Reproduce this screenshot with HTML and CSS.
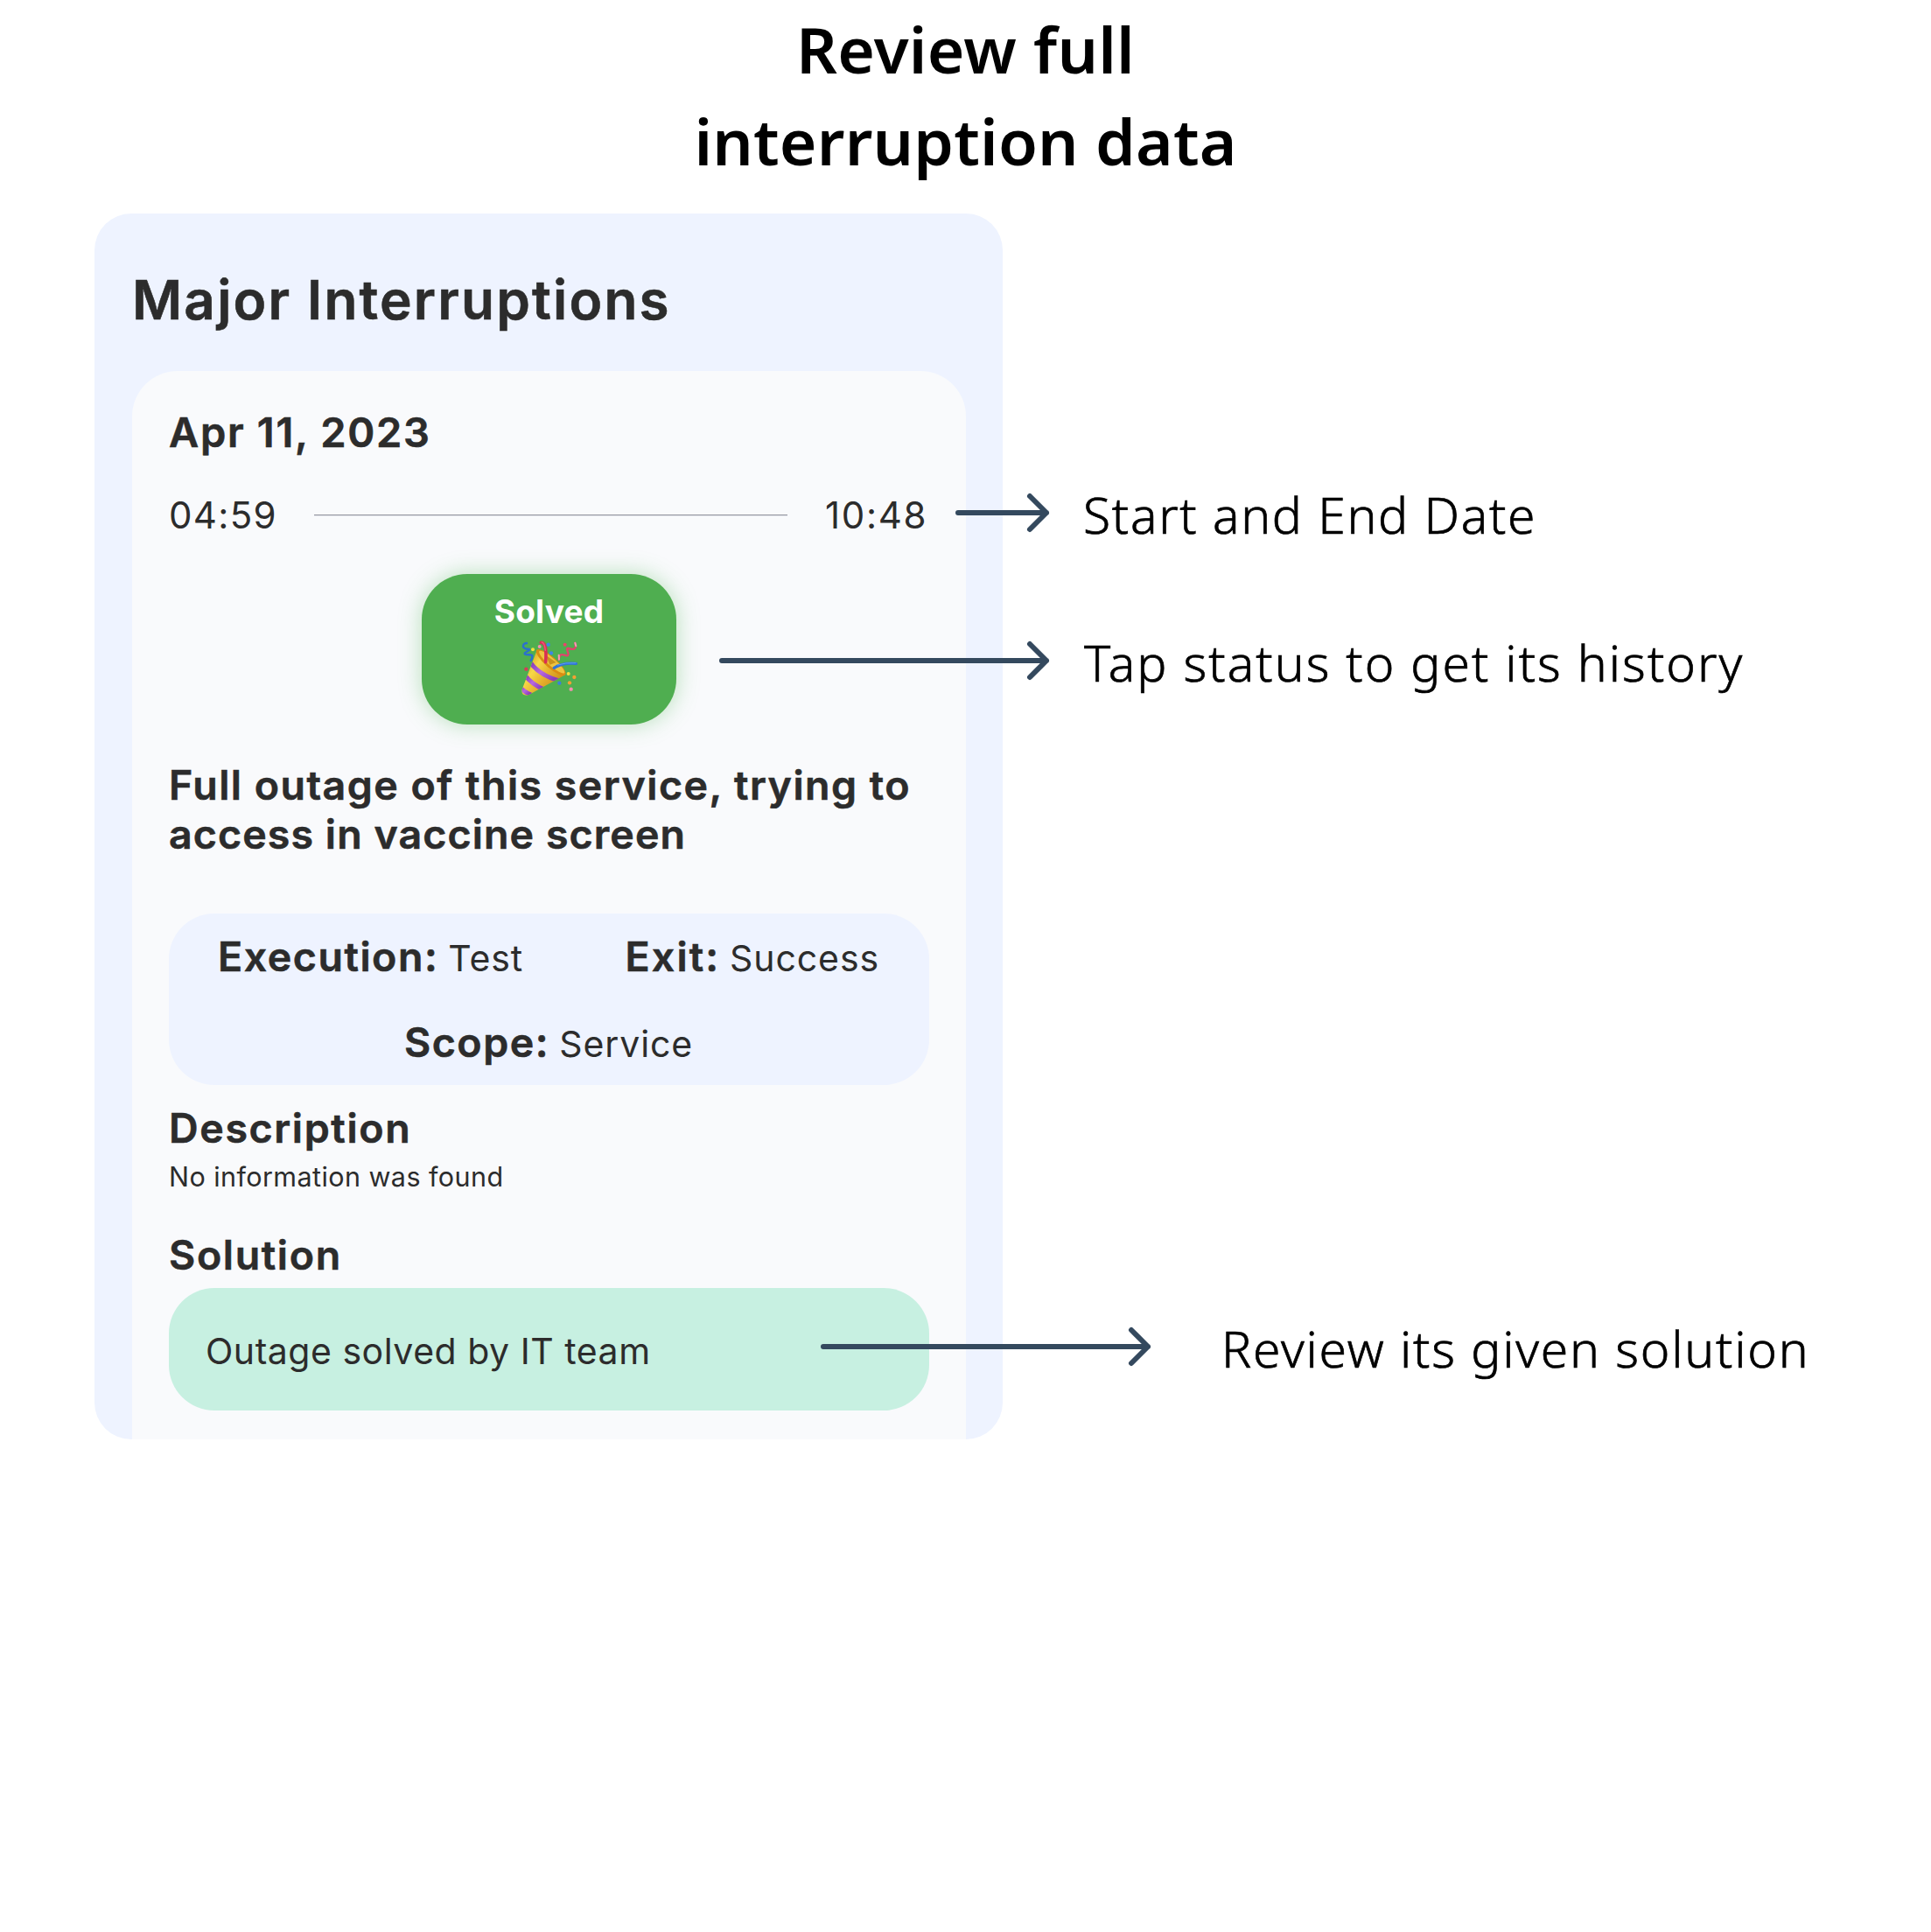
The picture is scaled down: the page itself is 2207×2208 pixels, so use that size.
FILE: index.html
```html
<!DOCTYPE html>
<html lang="en">
<head>
<meta charset="utf-8">
<title>Review full interruption data</title>
<link rel="stylesheet" href="styles.css">
</head>
<body>
<main class="page">
  <h1 class="headline">Review full<br>interruption data</h1>

  <section class="panel">
    <h2 class="panel-title">Major Interruptions</h2>
    <article class="card">
      <h3 class="date">Apr 11, 2023</h3>
      <div class="times">
        <span class="time time-start">04:59</span>
        <span class="rule"></span>
        <span class="time time-end">10:48</span>
      </div>
      <div class="status">
        <span class="status-label">Solved</span>
        <svg class="popper" viewBox="0 0 228 228" role="img" aria-label="Party popper">
          <defs>
            <linearGradient id="cone" x1="0" y1="0.3" x2="0.8" y2="0.9">
              <stop offset="0" stop-color="#d39a1c"/>
              <stop offset="0.3" stop-color="#f7d848"/>
              <stop offset="0.6" stop-color="#e5b02d"/>
              <stop offset="1" stop-color="#c98a17"/>
            </linearGradient>
            <linearGradient id="ribbon" x1="0" y1="0" x2="1" y2="0.6">
              <stop offset="0" stop-color="#8038b5"/>
              <stop offset="0.5" stop-color="#b768e0"/>
              <stop offset="1" stop-color="#8a3dbb"/>
            </linearGradient>
            <clipPath id="coneClip"><path d="M71 54 L20 189 Q16 208 36 209 L45 206 L168 139 Q150 124 118 98 Z"/></clipPath>
          </defs>
          <path d="M71 54 L20 189 Q16 208 36 209 L45 206 L168 139 Q150 124 118 98 Z" fill="url(#cone)"/>
          <g clip-path="url(#coneClip)" fill="none" stroke="url(#ribbon)" stroke-width="15">
            <path d="M48 96 Q78 139 146 159"/>
            <path d="M30 140 Q53 171 98 190"/>
            <path d="M12 180 Q27 197 52 208"/>
          </g>
          <ellipse cx="119" cy="96" rx="65" ry="19" transform="rotate(41 119 96)" fill="#d98c12"/>
          <ellipse cx="122" cy="95" rx="57" ry="13" transform="rotate(41 122 95)" fill="#edc440"/>
          <path d="M102 72 L137 96 L115 104 Z" fill="#c8921f"/>
          <path d="M85 28 Q106 25 101 95" fill="none" stroke="#d92f55" stroke-width="11" stroke-linecap="round"/>
          <path d="M88 27 Q98 30 100 55" fill="none" stroke="#f0587c" stroke-width="4" stroke-linecap="round"/>
          <path d="M130 115 Q158 96 205 100" fill="none" stroke="#2f74d8" stroke-width="10" stroke-linecap="round"/>
          <path d="M142 105 Q168 96 204 98" fill="none" stroke="#5e9df0" stroke-width="3" stroke-linecap="round"/>
          <path d="M36 30 Q22 31 24 43 Q28 50 45 51 C49 55 26 62 29 67 C32 73 54 66 55 74 Q56 82 50 90" fill="none" stroke="#2b6fcf" stroke-width="7" stroke-linecap="round" stroke-linejoin="round"/>
          <path d="M202 30 C208 52 198 53 177 48 C167 48 187 71 174 73 C159 70 150 61 146 87" fill="none" stroke="#e0456c" stroke-width="7" stroke-linecap="round" stroke-linejoin="round"/>
          <path d="M202 29 L205 40 M146 71 L147 86" fill="none" stroke="#f79bb4" stroke-width="6" stroke-linecap="round"/>
          <circle cx="80" cy="42" r="6" fill="#f48fb1"/>
          <circle cx="57" cy="52" r="6" fill="#f2e23c"/>
          <circle cx="110" cy="35" r="6.5" fill="#3d86e6"/>
          <circle cx="120" cy="64" r="6.5" fill="#3d86e6"/>
          <circle cx="167" cy="35" r="6" fill="#e8456b"/>
          <circle cx="34" cy="119" r="6.5" fill="#d33d58"/>
          <circle cx="179" cy="135" r="6" fill="#f2e23c"/>
          <circle cx="199" cy="147" r="6.5" fill="#f5a032"/>
          <circle cx="183" cy="166" r="6.5" fill="#f5a032"/>
          <circle cx="148" cy="167" r="6.5" fill="#3a80dc"/>
          <circle cx="188" cy="188" r="6.5" fill="#f48fb1"/>
        </svg>
      </div>
      <p class="message">Full outage of this service, trying to <span class="message-end">access in vaccine screen</span></p>
      <div class="facts">
        <div class="facts-row">
          <div class="fact"><span class="fact-name">Execution:</span><span class="fact-value">Test</span></div>
          <div class="fact"><span class="fact-name fact-name-exit">Exit:</span><span class="fact-value">Success</span></div>
        </div>
        <div class="facts-row facts-row-center">
          <div class="fact"><span class="fact-name">Scope:</span><span class="fact-value">Service</span></div>
        </div>
      </div>
      <h3 class="section-title">Description</h3>
      <p class="description">No information was found</p>
      <h3 class="section-title section-title-solution">Solution</h3>
      <div class="solution">Outage solved by IT team</div>
    </article>
  </section>

  <!-- Callouts drawn over the panel -->
  <svg class="arrow arrow-dates" width="114" height="52" viewBox="0 0 114 52"><path d="M6 26H107M88 7L107 26L88 45"/></svg>
  <p class="note note-dates">Start and End Date</p>
  <svg class="arrow arrow-status" width="384" height="52" viewBox="0 0 384 52"><path d="M6 26H377M358 7L377 26L358 45"/></svg>
  <p class="note note-status">Tap status to get its history</p>
  <svg class="arrow arrow-solution" width="384" height="52" viewBox="0 0 384 52"><path d="M6 26H377M358 7L377 26L358 45"/></svg>
  <p class="note note-solution">Review its given solution</p>
</main>
</body>
</html>
```
FILE: styles.css
```css
* { box-sizing: border-box; margin: 0; padding: 0; }

body { background: #fff; }

.page {
  position: relative;
  width: 2207px;
  height: 2208px;
  padding-top: 3px;
  overflow: hidden;
  font-family: Inter, "Liberation Sans", sans-serif;
  color: #2c2c2c;
}

.headline {
  height: 241px;
  font: 600 73px/105px "Noto Sans", "Open Sans", sans-serif;
  letter-spacing: 0.2px;
  text-align: center;
  color: #000;
}

.panel {
  width: 1038px;
  height: 1401px;
  margin-left: 108px;
  padding: 59px 42px 0 43px;
  border-radius: 42px;
  background: #eef3ff;
  overflow: hidden;
}

.panel-title,
.date,
.message,
.fact-name,
.section-title {
  font-weight: 600;
  -webkit-text-stroke: 0.6px #2c2c2c;
}

.panel-title {
  font-size: 62px;
  line-height: 80px;
  letter-spacing: 2.18px;
}

.card {
  margin-top: 41px;
  padding: 42px 42px 33px;
  border-radius: 52px 52px 0 0;
  background: #f9fafc;
}

.date {
  font-size: 47px;
  line-height: 56px;
  letter-spacing: 1.7px;
}

.times {
  display: flex;
  align-items: center;
  gap: 43px;
  height: 50px;
  margin-top: 41px;
}

.time {
  padding-top: 1px;
  font-size: 42px;
  line-height: 50px;
  letter-spacing: 1.65px;
  white-space: nowrap;
}

.time-start { width: 123px; letter-spacing: 1.3px; }
.time-end { width: 119px; }

.rule {
  flex: 1;
  height: 2px;
  margin-top: 2px;
  background: linear-gradient(#9496a0 50%, #e1e2e8 50%);
}

.status {
  display: flex;
  flex-direction: column;
  align-items: center;
  width: 291px;
  height: 172px;
  margin: 43px auto 0;
  padding-top: 21px;
  border-radius: 52px;
  background: #4fae50;
  box-shadow: 0 0 26px rgba(76, 185, 80, 0.38);
}

.status-label {
  font-size: 37px;
  line-height: 44px;
  font-weight: 700;
  letter-spacing: 0.2px;
  color: #fff;
}

.popper {
  width: 76px;
  height: 76px;
  margin-top: 4px;
}

.message {
  margin-top: 42px;
  font-size: 46.5px;
  line-height: 55.5px;
  letter-spacing: 1.48px;
}

.message-end { letter-spacing: 1.1px; }

.facts {
  display: flex;
  flex-direction: column;
  gap: 42px;
  margin-top: 63px;
  padding: 21px 57px 21px 56px;
  border-radius: 52px;
  background: #eef3ff;
}

.facts-row {
  display: flex;
  justify-content: space-between;
  height: 56px;
}

.facts-row-center { justify-content: center; }

.fact {
  display: flex;
  align-items: baseline;
  gap: 11px;
  line-height: 56px;
}

.fact-name {
  font-size: 46.5px;
  letter-spacing: 1.55px;
}

.fact-name-exit { letter-spacing: 2.1px; }

.fact-value {
  font-size: 41px;
  letter-spacing: 0.9px;
}

.section-title {
  margin-top: 21px;
  font-size: 46.5px;
  line-height: 56px;
  letter-spacing: 1.65px;
}

.section-title-solution { margin-top: 42px; }

.description {
  margin-top: 9px;
  font-size: 30.5px;
  line-height: 38px;
  letter-spacing: 0.43px;
}

.solution {
  height: 140px;
  margin-top: 10px;
  padding: 47px 42px 0;
  border-radius: 52px;
  background: #c7f0e1;
  font-size: 41px;
  line-height: 50px;
  letter-spacing: 0.52px;
}

.arrow {
  position: absolute;
  fill: none;
  stroke: #34495e;
  stroke-width: 6;
  stroke-linecap: round;
  stroke-linejoin: round;
}

.arrow-dates { left: 1089px; top: 560px; }
.arrow-status { left: 819px; top: 729px; }
.arrow-solution { left: 935px; top: 1513px; }

.note {
  position: absolute;
  font: 300 57px/76px "Noto Sans", "Open Sans", sans-serif;
  -webkit-text-stroke: 0.7px #000;
  white-space: nowrap;
  color: #000;
}

.note-dates { left: 1238px; top: 550px; letter-spacing: 1.7px; }
.note-status { left: 1239px; top: 719px; letter-spacing: 2.05px; }
.note-solution { left: 1396px; top: 1503px; letter-spacing: 1.77px; }
```
